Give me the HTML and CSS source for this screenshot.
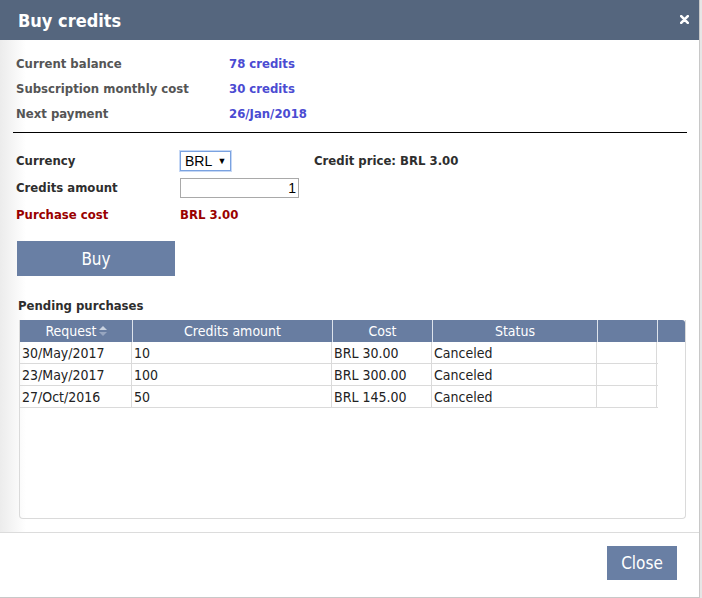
FILE: index.html
```html
<!DOCTYPE html>
<html>
<head>
<meta charset="utf-8">
<link rel="stylesheet" href="styles.css">
</head>
<body>
<div class="dialog">
  <div class="titlebar">
    <span class="title">Buy credits</span>
    <svg class="x" width="9" height="9" viewBox="0 0 9 9"><path d="M1.2 1.2 L7.8 7.8 M7.8 1.2 L1.2 7.8" stroke="#fff" stroke-width="2.6" stroke-linecap="round"/></svg>
  </div>
  <div class="content">
    <div class="info">
      <div class="irow"><span class="ilabel">Current balance</span><span class="ival">78 credits</span></div>
      <div class="irow"><span class="ilabel">Subscription monthly cost</span><span class="ival">30 credits</span></div>
      <div class="irow"><span class="ilabel">Next payment</span><span class="ival">26/Jan/2018</span></div>
    </div>
    <div class="rule"></div>
    <div class="form">
      <div class="frow">
        <span class="flabel">Currency</span>
        <span class="fctl"><span class="select">BRL <span class="arrow">&#9660;</span></span></span>
        <span class="price">Credit price: BRL 3.00</span>
      </div>
      <div class="frow">
        <span class="flabel">Credits amount</span>
        <span class="fctl"><span class="input">1</span></span>
      </div>
      <div class="frow cost">
        <span class="flabel">Purchase cost</span>
        <span class="fctl">BRL 3.00</span>
      </div>
    </div>
    <div class="buyrow"><span class="btn buy">Buy</span></div>
    <div class="pending">Pending purchases</div>
    <div class="grid">
      <div class="ghead">
        <div class="hc c1">Request<svg class="sort" width="8" height="10" viewBox="0 0 8 10"><path d="M4 0 L8 4 L0 4 Z" fill="#c9d2e0"/><path d="M0 6 L8 6 L4 10 Z" fill="#97a6c0"/></svg></div>
        <div class="hc c2">Credits amount</div>
        <div class="hc c3">Cost</div>
        <div class="hc c4">Status</div>
        <div class="hc c5"></div>
        <div class="hc c6"></div>
      </div>
      <div class="gbody">
        <div class="grow"><div class="dc c1">30/May/2017</div><div class="dc c2">10</div><div class="dc c3">BRL 30.00</div><div class="dc c4">Canceled</div><div class="dc c5"></div></div>
        <div class="grow"><div class="dc c1">23/May/2017</div><div class="dc c2">100</div><div class="dc c3">BRL 300.00</div><div class="dc c4">Canceled</div><div class="dc c5"></div></div>
        <div class="grow"><div class="dc c1">27/Oct/2016</div><div class="dc c2">50</div><div class="dc c3">BRL 145.00</div><div class="dc c4">Canceled</div><div class="dc c5"></div></div>
      </div>
    </div>
  </div>
  <div class="footer">
    <span class="btn close">Close</span>
  </div>
</div>
</body>
</html>
```

FILE: styles.css
```css
html, body {
  margin: 0;
  padding: 0;
  background: #e6e6e6;
}
body {
  width: 702px;
  height: 598px;
  overflow: hidden;
  font-family: "DejaVu Sans Condensed", "DejaVu Sans", sans-serif;
  font-size: 13px;
}
.dialog {
  width: 699px;
  height: 597px;
  background: #fff;
  border-right: 1px solid #c8c8c8;
  border-bottom: 1px solid #c8c8c8;
  display: flex;
  flex-direction: column;
}
.titlebar {
  height: 40px;
  background: #55667e;
  color: #fff;
  display: flex;
  align-items: center;
  justify-content: space-between;
  padding: 0 10px 0 18px;
  flex: none;
}
.title {
  font-weight: bold;
  font-size: 18px;
}
.x {
  display: block;
  margin-top: -1px;
}
.content {
  flex: none;
  height: 493px;
  border-bottom: 1px solid #dcdcdc;
  background: linear-gradient(to right, #ececec 0, #fff 26px);
  padding-top: 11px;
  box-sizing: border-box;
}
.info {
  padding-left: 16px;
}
.irow {
  height: 25px;
  line-height: 25px;
  display: flex;
  font-weight: bold;
}
.ilabel {
  width: 213px;
  color: #555;
}
.ival {
  color: #4b4bd2;
}
.rule {
  margin: 6px 12px 0 13px;
  border-top: 1px solid #000;
}
.form {
  padding: 14px 0 0 16px;
}
.frow {
  height: 27px;
  display: flex;
  align-items: center;
  font-weight: bold;
  color: #2e2e2e;
}
.flabel {
  width: 164px;
}
.fctl {
  width: 134px;
}
.cost {
  color: #990000;
}
.select {
  display: inline-block;
  height: 18px;
  line-height: 18px;
  border: 1px solid #7aa2e0;
  padding: 0 3px 0 4px;
  font-family: "Liberation Sans", sans-serif;
  font-weight: normal;
  font-size: 14px;
  color: #000;
  box-shadow: 0 0 0 1px #c6d8f5;
}
.arrow {
  font-size: 9px;
  vertical-align: 2px;
  margin-left: 2px;
}
.input {
  display: block;
  width: 115px;
  height: 18px;
  line-height: 18px;
  border: 1px solid #a9a9a9;
  text-align: right;
  padding-right: 2px;
  box-sizing: content-box;
  font-family: "Liberation Sans", sans-serif;
  font-weight: normal;
  font-size: 14px;
  color: #000;
}
.price {
  color: #2e2e2e;
}
.buyrow {
  padding: 13px 0 0 17px;
}
.btn {
  display: inline-flex;
  align-items: center;
  justify-content: center;
  background: #697fa4;
  color: #fff;
  font-family: "DejaVu Sans Condensed", sans-serif;
  font-size: 17px;
}
.buy {
  width: 158px;
  height: 35px;
}
.pending {
  margin: 21px 0 0 18px;
  font-weight: bold;
  color: #2e2e2e;
  height: 18px;
  line-height: 18px;
}
.grid {
  margin: 5px 0 0 19px;
  width: 667px;
  height: 199px;
  border: 1px solid #dadada;
  border-top: none;
  border-radius: 0 0 4px 4px;
  box-sizing: border-box;
  overflow: hidden;
  font-size: 14px;
}
.ghead {
  display: flex;
  height: 22px;
  background: #687da1;
  color: #fff;
  border-radius: 0 3px 0 0;
}
.hc {
  box-sizing: border-box;
  border-right: 1px solid #dde3ec;
  text-align: center;
  line-height: 22px;
  display: flex;
  align-items: center;
  justify-content: center;
}
.hc.c6 {
  border-right: none;
  flex: 1;
}
.sort {
  margin-left: 2px;
}
.c1 { width: 113px; }
.c2 { width: 200px; }
.c3 { width: 100px; }
.c4 { width: 165px; }
.c5 { width: 60px; }
.gbody {
  width: 638px;
}
.grow {
  display: flex;
  height: 22px;
  border-bottom: 1px solid #dadada;
  box-sizing: border-box;
}
.dc {
  box-sizing: border-box;
  border-right: 1px solid #dadada;
  padding-left: 2px;
  line-height: 22px;
  color: #222;
}
.dc.c1 {
  width: 112px;
}
.footer {
  flex: 1;
  display: flex;
  justify-content: flex-end;
  align-items: flex-start;
  padding: 13px 22px 0 0;
}
.close {
  width: 70px;
  height: 34px;
}
```
